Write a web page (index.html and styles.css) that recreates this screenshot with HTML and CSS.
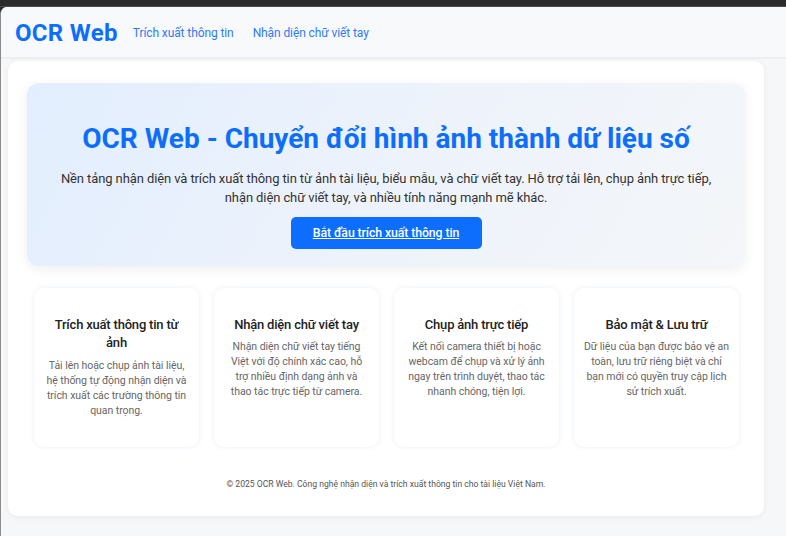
FILE: index.html
```html
<!DOCTYPE html>
<html lang="vi">
<head>
<meta charset="utf-8">
<title>OCR Web</title>
<link rel="stylesheet" href="styles.css">
</head>
<body>
<div class="topbar"></div>
<div class="window">
  <nav class="navbar">
    <a class="brand" href="#">OCR Web</a>
    <a class="nav-link" href="#">Trích xuất thông tin</a>
    <a class="nav-link" href="#">Nhận diện chữ viết tay</a>
  </nav>
  <main class="container">
    <section class="hero">
      <h1 class="hero-title">OCR Web - Chuyển đổi hình ảnh thành dữ liệu số</h1>
      <p class="hero-text">Nền tảng nhận diện và trích xuất thông tin từ ảnh tài liệu, biểu mẫu, và chữ viết tay. Hỗ trợ tải lên, chụp ảnh trực tiếp, nhận diện chữ viết tay, và nhiều tính năng mạnh mẽ khác.</p>
      <a class="btn" href="#">Bắt đầu trích xuất thông tin</a>
    </section>
    <section class="features">
      <div class="card">
        <h3 class="card-title">Trích xuất thông tin từ ảnh</h3>
        <p class="card-text">Tải lên hoặc chụp ảnh tài liệu,<br>hệ thống tự động nhận diện và<br>trích xuất các trường thông tin<br>quan trọng.</p>
      </div>
      <div class="card">
        <h3 class="card-title">Nhận diện chữ viết tay</h3>
        <p class="card-text">Nhận diện chữ viết tay tiếng<br>Việt với độ chính xác cao, hỗ<br>trợ nhiều định dạng ảnh và<br>thao tác trực tiếp từ camera.</p>
      </div>
      <div class="card">
        <h3 class="card-title">Chụp ảnh trực tiếp</h3>
        <p class="card-text">Kết nối camera thiết bị hoặc<br>webcam để chụp và xử lý ảnh<br>ngay trên trình duyệt, thao tác<br>nhanh chóng, tiện lợi.</p>
      </div>
      <div class="card">
        <h3 class="card-title">Bảo mật &amp; Lưu trữ</h3>
        <p class="card-text">Dữ liệu của bạn được bảo vệ an<br>toàn, lưu trữ riêng biệt và chỉ<br>bạn mới có quyền truy cập lịch<br>sử trích xuất.</p>
      </div>
    </section>
    <footer class="footer">© 2025 OCR Web. Công nghệ nhận diện và trích xuất thông tin cho tài liệu Việt Nam.</footer>
  </main>
</div>
</body>
</html>
```

FILE: styles.css
```css
* { box-sizing: border-box; }
html, body { margin: 0; padding: 0; }
body {
  background: #2b2b2b;
  font-family: Roboto, "Noto Sans", sans-serif;
  color: #212529;
  height: 536px;
  overflow: hidden;
}
.topbar {
  height: 7px;
  background: #2b2b2b;
  border-bottom: 1px solid #4a4a4a;
}
.window {
  background: #f6f7f9;
  border-left: 1px solid #8c8c8c;
  border-top-left-radius: 7px;
  height: 529px;
  overflow: hidden;
}
.navbar {
  height: 52px;
  background: #f8f9fa;
  border-bottom: 2px solid #eceef1;
  display: flex;
  align-items: center;
  padding-left: 14px;
  padding-top: 2px;
}
.brand {
  font-size: 24px;
  font-weight: 700;
  color: #0d6efd;
  text-decoration: none;
  margin-right: 15px;
  letter-spacing: 0.3px;
}
.nav-link {
  font-size: 12px;
  letter-spacing: -0.1px;
  color: #2f7bf5;
  text-decoration: none;
  margin-right: 19px;
}
.container {
  width: 756px;
  margin: 2px 0 0 7px;
  background: #fff;
  border-radius: 10px;
  box-shadow: 0 1px 6px rgba(0,0,0,0.06);
  padding: 22px 19px 27px;
}
.hero {
  background: linear-gradient(120deg, #e2eefe 0%, #eef3fb 55%, #f4f6f9 100%);
  border-radius: 12px;
  box-shadow: 0 3px 12px rgba(0,0,0,0.07);
  padding: 39px 20px 17px;
  text-align: center;
}
.hero-title {
  margin: 0 0 13px;
  font-size: 28px;
  font-weight: 700;
  color: #0d6efd;
  line-height: 1.2;
}
.hero-text {
  margin: 0 auto 9px;
  max-width: 660px;
  font-size: 13px;
  letter-spacing: -0.1px;
  line-height: 19.5px;
  color: #333;
}
.btn {
  display: inline-block;
  width: 191px;
  height: 32px;
  line-height: 32px;
  background: #0d6efd;
  color: #fff;
  border-radius: 5px;
  font-size: 12.3px;
  letter-spacing: -0.1px;
  font-weight: 500;
  text-decoration: underline;
}
.features {
  display: grid;
  grid-template-columns: repeat(4, 165px);
  gap: 15px;
  margin: 22px 0 0 7px;
}
.card {
  height: 159px;
  background: #fff;
  border-radius: 10px;
  box-shadow: 0 0 5px rgba(80,110,220,0.12);
  padding: 28px 8px 10px;
  text-align: center;
}
.card-title {
  margin: 0 auto 5px;
  max-width: 143px;
  font-size: 13px;
  letter-spacing: -0.2px;
  font-weight: 500;
  color: #222;
  line-height: 18.5px;
}
.card-text {
  margin: 0;
  font-size: 10.5px;
  letter-spacing: -0.05px;
  line-height: 15px;
  color: #666;
}
.footer {
  margin-top: 32px;
  text-align: center;
  font-size: 8.6px;
  color: #555;
}
```
